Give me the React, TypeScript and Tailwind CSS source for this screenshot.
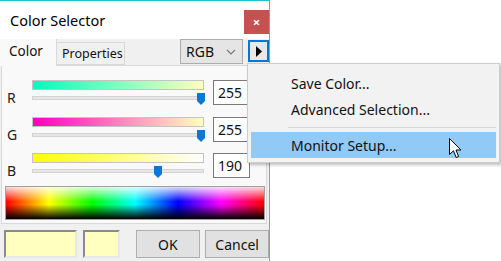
import React from "react";

const font = { fontFamily: '"Noto Sans", "Open Sans", sans-serif' };

function Thumb() {
  return (
    <svg width="8" height="12" viewBox="0 0 8 12" className="block">
      <path d="M0 0 H8 V8 L4 12 L0 8 Z" fill="#0a78d7" />
    </svg>
  );
}

function Row({
  label,
  gradient,
  value,
  thumbLeft,
  className,
}: {
  label: string;
  gradient: string;
  value: string;
  thumbLeft: number;
  className?: string;
}) {
  return (
    <div className={"flex h-[25px] " + (className ?? "")}>
      <div className="w-[30px] pl-[5px] pt-[10px] text-[14px] leading-[16px] text-[#222]">{label}</div>
      <div className="w-[172px] relative">
        <div className={"h-[10px] border border-[#c4c4c4] " + gradient} />
        <div className="mt-[6px] h-[4px] bg-[#e6e6e6] border border-[#d4d4d4]" />
        <div className="absolute top-[13px]" style={{ left: thumbLeft }}>
          <Thumb />
        </div>
      </div>
      <div className="ml-[9px] w-[37px] h-[25px] bg-white border border-[#7a7a7a] pl-[4px] text-[14px] leading-[23px] text-[#111]">
        {value}
      </div>
    </div>
  );
}

export default function App() {
  return (
    <div className="relative w-[501px] h-[261px] bg-white overflow-hidden text-[#111]" style={font}>
      <div className="w-[270px] h-[261px] bg-[#f0f0f0] border-t border-[#1ec2cb] border-r border-r-[#9a9a9a] flex flex-col">
        {/* Title bar */}
        <div className="h-[38px] bg-white flex items-start justify-between">
          <div className="pl-[10px] pt-[9px] text-[14.5px] leading-[20px] text-black">Color Selector</div>
          <div className="mt-[9px] w-[25px] h-[24px] bg-[#c75050] flex items-center justify-center text-white text-[13px] font-bold leading-none">
            ×
          </div>
        </div>
        {/* Tab row */}
        <div className="h-[26px] flex items-start relative">
          <div className="w-[57px] h-[27px] bg-[#f9f9f9] border-r border-[#d9d9d9] pl-[9px] pt-[3px] text-[13.5px] leading-[18px] z-10">
            Color
          </div>
          <div className="mt-[3px] w-[68px] h-[23px] bg-[#f0f0f0] border border-[#d9d9d9] border-l-0 pl-[5px] pt-[2px] text-[12.5px] leading-[17px]">
            Properties
          </div>
          <div className="flex-1" />
          <div className="w-[63px] h-[25px] bg-[#e5e5e5] border border-[#acacac] flex items-center justify-between pl-[5px] pr-[6px]">
            <span className="text-[14px] leading-[18px]">RGB</span>
            <svg width="10" height="6" viewBox="0 0 10 6">
              <path d="M1 1 L5 5 L9 1" stroke="#7a7a7a" strokeWidth="1.2" fill="none" />
            </svg>
          </div>
          <div className="ml-[5px] mt-[1px] w-[21px] h-[22px] border-2 border-[#0078d7] bg-[#e8e8e8] flex items-center justify-center">
            <svg width="6" height="11" viewBox="0 0 6 11">
              <path d="M0 0 L6 5.5 L0 11 Z" fill="#000" />
            </svg>
          </div>
        </div>
        {/* Panel */}
        <div className="ml-[1px] w-[266px] h-[159px] bg-[#f9f9f9] border border-[#d9d9d9] pt-[14px] pl-[0px]">
          <Row
            label="R"
            gradient="bg-[linear-gradient(to_right,#00ffbe,#ffffbe)]"
            value="255"
            thumbLeft={165}
          />
          <Row
            label="G"
            gradient="bg-[linear-gradient(to_right,#ff00be,#ffffbe)]"
            value="255"
            thumbLeft={165}
            className="mt-[12px]"
          />
          <Row
            label="B"
            gradient="bg-[linear-gradient(to_right,#ffff00,#ffffff)]"
            value="190"
            thumbLeft={122}
            className="mt-[11px]"
          />
          <div className="mt-[8px] ml-[3px] w-[260px] h-[34px] border border-[#a0a0a0] bg-[linear-gradient(to_right,#ff0000,#ffff00,#00ff00,#00ffff,#0000ff,#ff00ff,#ff0000)]">
            <div className="w-full h-full bg-[linear-gradient(to_bottom,rgba(255,255,255,0.85),rgba(255,255,255,0)_45%,rgba(0,0,0,0)_55%,#000)]" />
          </div>
        </div>
        {/* Bottom row */}
        <div className="flex items-start pt-[6px] pl-[4px]">
          <div className="w-[73px] h-[28px] bg-[#ffffc0] border-2 border-[#8a8a8a] border-r-[#e8e8e8] border-b-[#e8e8e8]" />
          <div className="ml-[6px] w-[37px] h-[28px] bg-[#ffffc0] border-2 border-[#8a8a8a] border-r-[#e8e8e8] border-b-[#e8e8e8]" />
          <div className="ml-[16px] w-[65px] h-[28px] bg-[#e1e1e1] border border-[#adadad] flex items-center justify-center text-[14px]">
            OK
          </div>
          <div className="ml-[5px] w-[64px] h-[28px] bg-[#e1e1e1] border border-[#adadad] flex items-center justify-center text-[14px]">
            Cancel
          </div>
        </div>
      </div>

      {/* Popup menu */}
      <div className="absolute left-[247px] top-[63px] w-[253px] h-[100px] bg-[#f2f2f2] border border-[#cccccc] shadow-[2px_2px_3px_rgba(0,0,0,0.25)] pt-[6px] px-[3px] text-[14px] text-[#111]">
        <div className="h-[26px] flex items-center pl-[40px]">Save Color...</div>
        <div className="h-[26px] flex items-center pl-[40px]">Advanced Selection...</div>
        <div className="h-[10px] flex items-center pl-[37px]">
          <div className="w-full h-[1px] bg-[#d7d7d7]" />
        </div>
        <div className="h-[26px] flex items-center pl-[40px] bg-[#91c9f7]">Monitor Setup...</div>
      </div>

      {/* Cursor */}
      <svg className="absolute left-[449px] top-[138px]" width="13" height="21" viewBox="0 0 13 21">
        <path
          d="M0.5 0.5 L0.5 16.5 L4.5 12.8 L7.2 19.5 L9.6 18.5 L7 12 L12 12 Z"
          fill="#fff"
          stroke="#000"
          strokeWidth="1"
          strokeLinejoin="miter"
        />
      </svg>
    </div>
  );
}
